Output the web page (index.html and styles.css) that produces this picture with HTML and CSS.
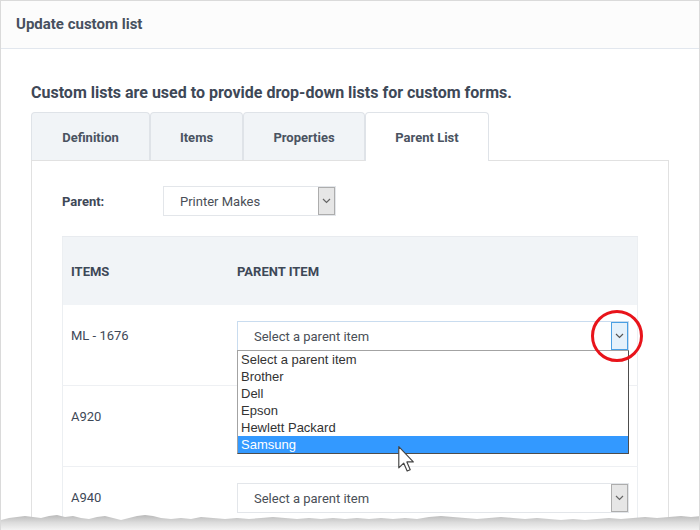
FILE: index.html
```html
<!DOCTYPE html>
<html>
<head>
<meta charset="utf-8">
<link rel="stylesheet" href="styles.css">
</head>
<body>
<div class="frame">
  <div class="header">Update custom list</div>
  <div class="content">
    <h2 class="lead">Custom lists are used to provide drop-down lists for custom forms.</h2>
    <div class="tabs">
      <div class="tab tab-def">Definition</div>
      <div class="tab tab-items">Items</div>
      <div class="tab tab-props">Properties</div>
      <div class="tab tab-parent active">Parent List</div>
    </div>
    <div class="panel">
      <div class="parent-row">
        <span class="parent-label">Parent:</span>
        <div class="select select-parent">
          <span class="select-text">Printer Makes</span>
          <span class="select-btn"><svg width="9" height="6" viewBox="0 0 9 6"><path d="M1 1l3.5 3.5L8 1" fill="none" stroke="#666" stroke-width="1.2"/></svg></span>
        </div>
      </div>
      <table class="grid">
        <thead>
          <tr><th class="col-items">Items</th><th>Parent item</th></tr>
        </thead>
        <tbody>
          <tr>
            <td class="item">ML - 1676</td>
            <td>
              <div class="select-wrap">
                <div class="select select-row focus">
                  <span class="select-text">Select a parent item</span>
                  <span class="select-btn"><svg width="9" height="6" viewBox="0 0 9 6"><path d="M1 1l3.5 3.5L8 1" fill="none" stroke="#555" stroke-width="1.2"/></svg></span>
                </div>
                <ul class="dropdown">
                  <li>Select a parent item</li>
                  <li>Brother</li>
                  <li>Dell</li>
                  <li>Epson</li>
                  <li>Hewlett Packard</li>
                  <li class="selected">Samsung</li>
                </ul>
                <div class="ring"></div>
                <svg class="cursor" width="17" height="27" viewBox="0 0 13 21"><path d="M0.5 0.5 L0.5 17 L4.3 13.3 L7 19.5 L9.4 18.5 L6.8 12.4 L11.8 12.4 Z" fill="#fff" stroke="#444" stroke-width="0.9" stroke-linejoin="round"/></svg>
              </div>
            </td>
          </tr>
          <tr>
            <td class="item">A920</td>
            <td>
              <div class="select select-row covered">
                <span class="select-text">Select a parent item</span>
                <span class="select-btn"></span>
              </div>
            </td>
          </tr>
          <tr>
            <td class="item">A940</td>
            <td>
              <div class="select select-row">
                <span class="select-text">Select a parent item</span>
                <span class="select-btn"><svg width="9" height="6" viewBox="0 0 9 6"><path d="M1 1l3.5 3.5L8 1" fill="none" stroke="#666" stroke-width="1.2"/></svg></span>
              </div>
            </td>
          </tr>
        </tbody>
      </table>
    </div>
  </div>
  <svg class="tear" width="700" height="18" viewBox="0 0 700 18" preserveAspectRatio="none">
    <defs>
      <linearGradient id="tg" x1="0" y1="0" x2="0" y2="1">
        <stop offset="0" stop-color="#b9b9b9"/>
        <stop offset="0.5" stop-color="#dcdcdc"/>
        <stop offset="1" stop-color="#f3f3f3"/>
      </linearGradient>
    </defs>
    <path d="M0 8 L8 6 L16 5 L24 4 L32 5 L40 6 L48 4 L56 3 L64 5 L72 4 L80 6 L88 7 L96 5 L104 4 L112 6 L120 8 L128 6 L136 4 L144 3 L152 4 L160 6 L170 7 L180 6 L190 7 L200 5 L212 6 L224 7 L236 6 L248 7 L260 6 L272 5 L284 6 L296 7 L308 6 L320 7 L332 6 L344 7 L356 6 L368 7 L380 6 L392 7 L404 6 L416 7 L428 5 L440 4 L452 5 L464 6 L476 7 L488 6 L500 5 L512 6 L524 7 L536 6 L548 7 L560 8 L572 7 L584 8 L596 7 L608 6 L620 7 L632 6 L644 5 L656 6 L668 5 L680 4 L690 5 L700 4 L700 18 L0 18 Z" fill="url(#tg)"/>
  </svg>
</div>
</body>
</html>
```
FILE: styles.css
```css
html, body {
  margin: 0;
  padding: 0;
}

body {
  width: 700px;
  height: 530px;
  overflow: hidden;
  background: #fff;
  font-family: Roboto, "Liberation Sans", Arial, sans-serif;
}

.frame {
  position: relative;
  height: 530px;
  box-sizing: border-box;
  border: 1px solid #dadada;
  border-bottom: 0;
  overflow: hidden;
}

.header {
  height: 47px;
  line-height: 47px;
  padding-left: 15px;
  background: #fcfcfc;
  border-bottom: 1px solid #e2e7ee;
  font-size: 15px;
  font-weight: 700;
  color: #47505f;
}

.content {
  padding: 34px 30px 0 30px;
}

.lead {
  margin: 0 0 9px;
  font-size: 16px;
  line-height: 20px;
  font-weight: 700;
  color: #3e4857;
}

.tabs {
  display: flex;
  align-items: flex-start;
  height: 48px;
}

.tab {
  box-sizing: border-box;
  height: 48px;
  padding-top: 2px;
  border: 1px solid #dfe3e8;
  border-bottom: 0;
  border-radius: 4px 4px 0 0;
  background: #f1f4f7;
  display: flex;
  align-items: center;
  justify-content: center;
  font-size: 13px;
  font-weight: 700;
  color: #4a5361;
}

.tab-def { width: 119px; }
.tab-items { width: 93px; }
.tab-props { width: 122px; }
.tab-parent { width: 124px; }

.tab.active {
  position: relative;
  z-index: 1;
  height: 49px;
  padding-bottom: 1px;
  background: #fff;
}

.panel {
  min-height: 420px;
  border: 1px solid #e1e1e1;
  padding: 25px 30px 0 30px;
}

.parent-row {
  display: flex;
  align-items: center;
  height: 30px;
}

.parent-label {
  width: 101px;
  font-size: 13px;
  font-weight: 700;
  color: #3e4857;
}

.select {
  box-sizing: border-box;
  display: flex;
  align-items: center;
  height: 30px;
  border: 1px solid #e3e6ea;
  background: #fff;
}

.select-parent {
  width: 173px;
}

.select-text {
  flex: 1;
  padding-left: 16px;
  font-size: 13px;
  color: #4a4f57;
}

.select-btn {
  box-sizing: border-box;
  width: 17px;
  height: 28px;
  border: 1px solid #adadad;
  background: #e6e6e6;
  display: flex;
  align-items: center;
  justify-content: center;
}

.grid {
  margin-top: 20px;
  width: 576px;
  border-collapse: collapse;
  border-left: 1px solid #eceff2;
  border-right: 1px solid #eceff2;
}

.grid th {
  height: 68px;
  padding: 0 8px;
  text-align: left;
  background: #f1f4f7;
  border-top: 1px solid #e8ebef;
  font-size: 13px;
  font-weight: 700;
  text-transform: uppercase;
  color: #3e4857;
}

.grid th.col-items {
  width: 150px;
}

.grid td {
  padding: 16px 8px 34px;
  vertical-align: top;
  border-bottom: 1px solid #eef0f3;
}

.grid td.item {
  line-height: 30px;
  font-size: 13px;
  color: #3e4857;
}

.select-wrap {
  position: relative;
}

.select-row {
  width: 392px;
}

.select.covered {
  visibility: hidden;
}

.select.focus {
  border-color: #c9dcef;
}

.select.focus .select-btn {
  background: #e5f1fb;
  border-color: #4a9fe3;
}

.dropdown {
  position: absolute;
  z-index: 2;
  top: 29px;
  left: 0;
  width: 392px;
  box-sizing: border-box;
  margin: 0;
  padding: 0;
  list-style: none;
  background: #fff;
  border: 1px solid;
  border-color: #a3a3a3 #4d4d4d #4d4d4d #a3a3a3;
  font-family: "Liberation Sans", Arial, sans-serif;
  font-size: 13px;
  color: #333;
}

.dropdown li {
  height: 17px;
  line-height: 17px;
  padding-left: 3px;
}

.dropdown li.selected {
  background: #3399ff;
  color: #fff;
}

.ring {
  position: absolute;
  z-index: 3;
  left: 354px;
  top: -11px;
  width: 52px;
  height: 52px;
  box-sizing: border-box;
  border: 3px solid #e8141b;
  border-radius: 50%;
}

.cursor {
  position: absolute;
  z-index: 4;
  left: 161px;
  top: 125px;
}

.tear {
  position: absolute;
  left: 0;
  bottom: 0;
  z-index: 5;
}
```
